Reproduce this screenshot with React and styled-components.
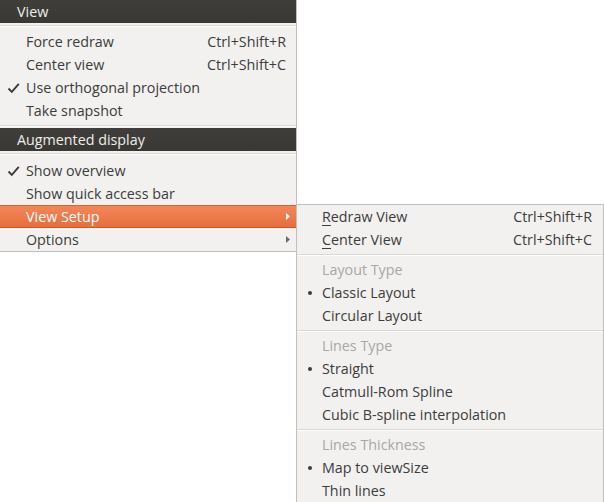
import React from "react";
import styled, { createGlobalStyle } from "styled-components";

const GlobalStyle = createGlobalStyle`
  html, body { margin: 0; padding: 0; background: #ffffff; }
  body {
    font-family: "Open Sans", "DejaVu Sans", sans-serif;
    font-size: 14.3px;
    color: #3c3c3c;
  }
`;

const Page = styled.div`
  width: 604px;
  height: 502px;
  overflow: hidden;
`;

const Menu = styled.div`
  width: 297px;
  box-sizing: border-box;
  background: #f2f1f0;
  border-right: 1px solid #c2c0bd;
  border-bottom: 1px solid #c2c0bd;
  display: flex;
  flex-direction: column;
`;

const SubMenu = styled.div`
  position: absolute;
  left: 100%;
  top: -1px;
  width: 308px;
  box-sizing: border-box;
  background: #f2f1f0;
  border: 1px solid #c2c0bd;
  display: flex;
  flex-direction: column;
  z-index: 2;
`;

const SectionHeader = styled.div`
  height: 23px;
  background: linear-gradient(#3f3e3a, #393834);
  color: #eeeeec;
  padding-left: 17px;
  display: flex;
  align-items: center;
`;

const Sep = styled.div`
  margin-top: ${(p) => p.$before}px;
  margin-bottom: ${(p) => p.$after}px;
  height: 1px;
  background: #d9d7d4;
  border-bottom: 1px solid #ffffff;
`;

const Item = styled.div`
  position: relative;
  height: 23px;
  display: flex;
  align-items: center;
  padding-right: 6px;
  color: ${(p) => (p.$active ? "#ffffff" : p.$disabled ? "#a9a7a4" : "#3c3c3c")};
  background: ${(p) =>
    p.$active ? "linear-gradient(#f3885b, #e66d3b)" : "transparent"};
  box-shadow: ${(p) =>
    p.$active ? "inset 0 1px 0 #d9622f, inset 0 -1px 0 #cf5a29" : "none"};
`;

const Gutter = styled.div`
  width: ${(p) => p.$w}px;
  flex: none;
  display: flex;
  align-items: center;
  justify-content: center;
  padding-left: 1px;
  box-sizing: border-box;
`;

const Label = styled.span`
  flex: 1;
  white-space: nowrap;
  u {
    text-decoration: underline;
    text-underline-offset: 3px;
    text-decoration-thickness: 1px;
  }
`;

const Shortcut = styled.span`
  white-space: nowrap;
  padding-right: ${(p) => p.$pad}px;
`;

const ArrowBox = styled.span`
  width: 5px;
  display: flex;
  align-items: center;
  justify-content: flex-end;
  margin-left: auto;
`;

const Bullet = styled.span`
  width: 4px;
  height: 4px;
  border-radius: 50%;
  background: #3c3c3c;
`;

const Check = () => (
  <svg width="13" height="12" viewBox="0 0 13 12">
    <path d="M1.5 6.5 L4.8 9.8 L11.8 1.8" fill="none" stroke="#3c3c3c" strokeWidth="1.9" />
  </svg>
);

const Arrow = ({ color }) => (
  <svg width="4" height="7" viewBox="0 0 4 7">
    <path d="M0 0 L4 3.5 L0 7 Z" fill={color} />
  </svg>
);

function MenuItem({ label, shortcut, mark, arrow, active, disabled, pad = 4, gutter = 26, children }) {
  return (
    <Item $active={active} $disabled={disabled}>
      <Gutter $w={gutter}>
        {mark === "check" && <Check />}
        {mark === "bullet" && <Bullet />}
      </Gutter>
      <Label>{label}</Label>
      {shortcut && <Shortcut $pad={pad}>{shortcut}</Shortcut>}
      {arrow && (
        <ArrowBox>
          <Arrow color={active ? "#ffffff" : "#6b6b6b"} />
        </ArrowBox>
      )}
      {children}
    </Item>
  );
}

const subItems = [
  { label: <><u>R</u>edraw View</>, shortcut: "Ctrl+Shift+R" },
  { label: <><u>C</u>enter View</>, shortcut: "Ctrl+Shift+C" },
  { sep: true },
  { label: "Layout Type", disabled: true },
  { label: "Classic Layout", mark: "bullet" },
  { label: "Circular Layout" },
  { sep: true },
  { label: "Lines Type", disabled: true },
  { label: "Straight", mark: "bullet" },
  { label: "Catmull-Rom Spline" },
  { label: "Cubic B-spline interpolation" },
  { sep: true },
  { label: "Lines Thickness", disabled: true },
  { label: "Map to viewSize", mark: "bullet" },
  { label: "Thin lines" },
];

export default function App() {
  return (
    <Page>
      <GlobalStyle />
      <Menu>
        <SectionHeader>View</SectionHeader>
        <Sep $before={2} $after={3} />
        <MenuItem label="Force redraw" shortcut="Ctrl+Shift+R" />
        <MenuItem label="Center view" shortcut="Ctrl+Shift+C" />
        <MenuItem label="Use orthogonal projection" mark="check" />
        <MenuItem label="Take snapshot" />
        <Sep $before={3} $after={1} />
        <SectionHeader>Augmented display</SectionHeader>
        <Sep $before={2} $after={4} />
        <MenuItem label="Show overview" mark="check" />
        <MenuItem label="Show quick access bar" />
        <MenuItem label="View Setup" arrow active>
          <SubMenu>
            {subItems.map((it, i) =>
              it.sep ? (
                <Sep key={i} $before={3} $after={2} />
              ) : (
                <MenuItem
                  key={i}
                  label={it.label}
                  shortcut={it.shortcut}
                  mark={it.mark}
                  disabled={it.disabled}
                  gutter={25}
                  pad={5}
                />
              )
            )}
          </SubMenu>
        </MenuItem>
        <MenuItem label="Options" arrow />
      </Menu>
    </Page>
  );
}
